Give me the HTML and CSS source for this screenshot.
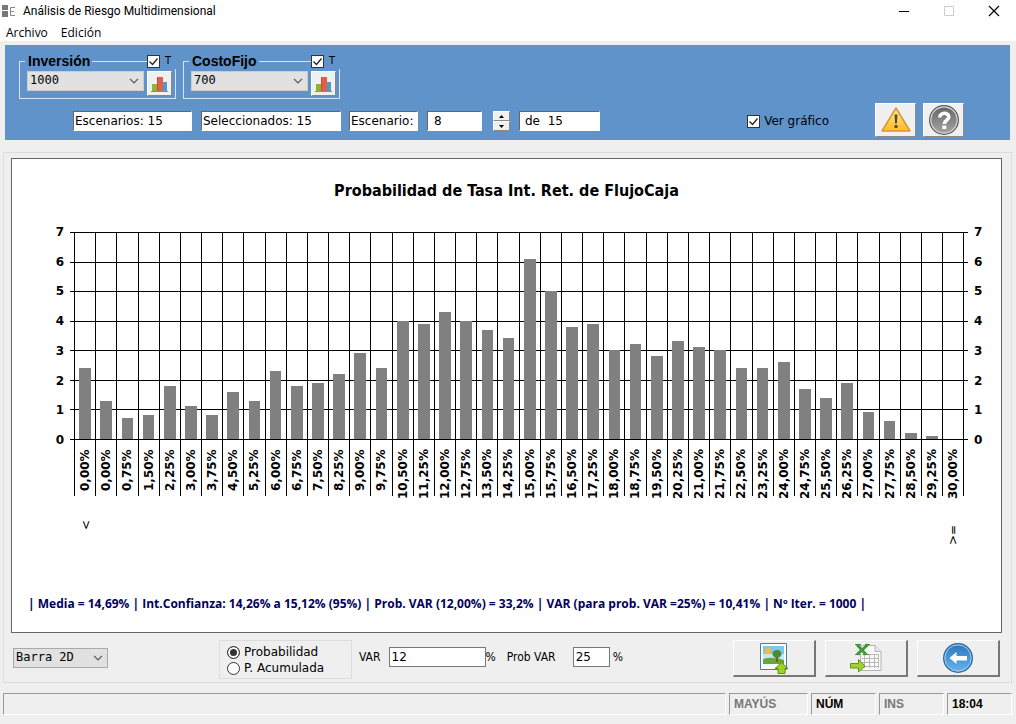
FILE: index.html
```html
<!DOCTYPE html>
<html lang="es">
<head>
<meta charset="utf-8">
<title>Análisis de Riesgo Multidimensional</title>
<link rel="stylesheet" href="styles.css">
</head>
<body>
<header class="titlebar">
  <svg class="app-icon" width="14" height="12" viewBox="0 0 14 12"><path fill="#777" d="M0 0h6v5H0zM0 6h6v6H0z"/><path fill="none" stroke="#888" d="M13 2.500H8.500v8H13M8.500 6.500H12"/></svg>
  <h1 class="app-title">Análisis de Riesgo Multidimensional</h1>
  <button class="win-btn" aria-label="Minimizar"><svg width="12" height="12" viewBox="0 0 12 12"><path stroke="#000" d="M1 6.500h10"/></svg></button>
  <button class="win-btn" aria-label="Maximizar" disabled><svg width="12" height="12" viewBox="0 0 12 12"><path fill="none" stroke="#ccc" d="M1.500 1.500h9v9h-9z"/></svg></button>
  <button class="win-btn" aria-label="Cerrar"><svg width="12" height="12" viewBox="0 0 12 12"><path stroke="#000" stroke-width="1.200" d="M1 1l10 10M11 1L1 11"/></svg></button>
</header>
<nav class="menubar"><button>Archivo</button><button>Edición</button></nav>

<section class="toolbar">
  <div class="groups">
    <div class="group" role="group" aria-labelledby="g1">
      <div class="group-head"><label class="group-name" id="g1" for="inv">Inversión</label><label class="group-check"><input type="checkbox" checked>T</label></div>
      <div class="group-body">
        <select id="inv" class="combo"><option>1000</option></select>
        <button class="mini-btn" aria-label="Gráfico de Inversión"><svg width="17" height="16" viewBox="0 0 17 16"><path fill="#91b52b" d="M1 8h5v7H1z"/><path fill="#e2604a" d="M6 1h6v14H6z"/><path fill="#c84a37" d="M6 1h1v14H6z"/><path fill="#4d9bcb" d="M12 6h4v9h-4z"/><path fill="#8a8a8a" d="M0 15h17v1H0z"/></svg></button>
      </div>
    </div>
    <div class="group" role="group" aria-labelledby="g2">
      <div class="group-head"><label class="group-name" id="g2" for="costo">CostoFijo</label><label class="group-check"><input type="checkbox" checked>T</label></div>
      <div class="group-body">
        <select id="costo" class="combo"><option>700</option></select>
        <button class="mini-btn" aria-label="Gráfico de CostoFijo"><svg width="17" height="16" viewBox="0 0 17 16"><path fill="#91b52b" d="M1 8h5v7H1z"/><path fill="#e2604a" d="M6 1h6v14H6z"/><path fill="#c84a37" d="M6 1h1v14H6z"/><path fill="#4d9bcb" d="M12 6h4v9h-4z"/><path fill="#8a8a8a" d="M0 15h17v1H0z"/></svg></button>
      </div>
    </div>
  </div>
  <div class="scenario-row">
    <input class="sunken w-total" aria-label="Escenarios" value="Escenarios: 15" readonly>
    <input class="sunken w-selected" aria-label="Seleccionados" value="Seleccionados: 15" readonly>
    <input class="sunken w-label" aria-label="Escenario" value="Escenario:" readonly>
    <input class="sunken w-number" aria-label="Número de escenario" value="8">
    <div class="spinner">
      <button aria-label="Subir"><svg width="5" height="3" viewBox="0 0 5 3"><path d="M0 3l2.500-3L5 3z"/></svg></button>
      <button aria-label="Bajar"><svg width="5" height="3" viewBox="0 0 5 3"><path d="M0 0l2.500 3L5 0z"/></svg></button>
    </div>
    <input class="sunken w-of" aria-label="Total" value="de  15" readonly>
    <label class="show-chart"><input type="checkbox" checked>Ver gráfico</label>
    <button class="tool-btn" aria-label="Advertencias"><svg width="30" height="28" viewBox="0 0 30 28"><defs><linearGradient id="warn" x2="0" y2="1"><stop offset="0" stop-color="#ffe699"/><stop offset="1" stop-color="#ffbd22"/></linearGradient></defs><path fill="url(#warn)" stroke="#d99832" stroke-width="1.500" stroke-linejoin="round" d="M15 2L29 25H1z"/><path fill="#554a32" d="M13.500 8.500h3l-.6 9h-1.800zM13.500 19h3v3h-3z"/></svg></button>
    <button class="tool-btn" aria-label="Ayuda"><svg width="32" height="32" viewBox="0 0 32 32"><defs><linearGradient id="help" x2="0" y2="1"><stop offset="0" stop-color="#666"/><stop offset="1" stop-color="#a4a4a4"/></linearGradient></defs><circle cx="16" cy="16" r="15" fill="#555"/><circle cx="16" cy="16" r="13.200" fill="url(#help)" stroke="#ddd" stroke-width="1.200"/><path fill="none" stroke="#fff" stroke-width="3.600" d="M11.800 13.500c0-5.500 9-5.500 9-.5 0 3.500-4.500 3-4.500 7"/><path fill="#fff" d="M14.300 21.500h4V25h-4z"/></svg></button>
  </div>
</section>

<main class="panel">
  <section class="chart-box">
    <h2 class="chart-title">Probabilidad de Tasa Int. Ret. de FlujoCaja</h2>
    <div class="chart">
      <div class="axis axis-left" id="axis-left"></div>
      <div class="plot">
        <div class="lines" id="lines"></div>
        <div class="columns" id="columns"></div>
      </div>
      <div class="axis axis-right" id="axis-right"></div>
    </div>
    <div class="marks"><span class="mark">&lt;</span><span class="mark mark-last">&gt;=</span></div>
    <p class="stats">| Media = 14,69% | Int.Confianza: 14,26% a 15,12% (95%) | Prob. VAR (12,00%) = 33,2% | VAR (para prob. VAR =25%) = 10,41% | Nº Iter. = 1000 |</p>
  </section>
  <section class="controls">
    <select class="combo chart-type" aria-label="Tipo de gráfico"><option>Barra 2D</option></select>
    <div class="radios" role="radiogroup" aria-label="Modo">
      <label><input type="radio" name="mode" checked>Probabilidad</label>
      <label><input type="radio" name="mode">P. Acumulada</label>
    </div>
    <div class="vars">
      <label for="var">VAR</label><input id="var" class="plain w-var" value="12"><span>%</span>
      <label class="prob-label" for="prob">Prob VAR</label><input id="prob" class="plain w-prob" value="25"><span class="prob-unit">%</span>
    </div>
    <div class="actions">
      <button class="wide-btn" aria-label="Exportar imagen"><svg width="30" height="32" viewBox="0 0 30 32"><path fill="#fff" stroke="#4a7fa5" d="M1.500 1.500h26v26h-26z"/><path fill="#7cc8ea" d="M4 4h21v18H4z"/><path fill="#c5e9f0" d="M4 12h21v6H4z"/><path fill="#66a63a" d="M4 17q9-3 21 1v4H4z"/><circle cx="9" cy="9" r="3.200" fill="#f7b944"/><path fill="#7a5a30" d="M17 14h2v6h-2z"/><ellipse cx="18" cy="12" rx="4.500" ry="4" fill="#4c8a35"/><path fill="#9bd32a" stroke="#5b9114" d="M22.500 20.500l6.500 6h-3v5h-7v-5h-3z"/></svg></button>
      <button class="wide-btn" aria-label="Exportar a Excel"><svg width="32" height="30" viewBox="0 0 32 30"><path fill="#fafafa" stroke="#b5b5b5" d="M10.500 2.500H25l6 6v19H10.500z"/><path fill="#e7e7e7" stroke="#b5b5b5" d="M25 2.500v6h6"/><path fill="none" stroke="#b8b8b8" d="M12 11.500h17M12 15.500h17M12 19.500h17M12 23.500h17M14.500 11v14M19.500 11v14M24.500 11v14M28.500 11v14"/><path fill="none" stroke="#3d9a35" stroke-width="3" d="M7 1.500l9 10M18 1.500L7 11.500"/><path fill="none" stroke="#3d9a35" d="M5 1.500h6M15 1.500h5M5 11.500h5M13 11.500h6"/><path fill="#a2d32b" stroke="#62951a" d="M.5 20.500h8v-4l6.500 6.500-6.500 6v-4h-8z"/></svg></button>
      <button class="wide-btn" aria-label="Volver"><svg width="32" height="32" viewBox="0 0 32 32"><defs><linearGradient id="back" x2="0" y2="1"><stop offset="0" stop-color="#2f78bd"/><stop offset="1" stop-color="#63b3ec"/></linearGradient></defs><circle cx="16" cy="16" r="15" fill="#286aaa"/><circle cx="16" cy="16" r="13.200" fill="url(#back)" stroke="#b5d5ef"/><path fill="#fff" d="M7.500 16l7-6v4H25v4.500H14.500V22z"/></svg></button>
    </div>
  </section>
</main>

<footer class="statusbar">
  <span class="cell cell-main"></span>
  <span class="cell cell-caps off">MAYÚS</span>
  <span class="cell">NÚM</span>
  <span class="cell off">INS</span>
  <span class="cell">18:04</span>
</footer>
<script src="chart.js"></script>
</body>
</html>
```
FILE: styles.css
```css
* { box-sizing: border-box; }
body { margin: 0; min-height: 100vh; display: flex; flex-direction: column; background: #efefef; color: #000; font: 12px/16px "DejaVu Sans", Verdana, sans-serif; }
button { margin: 0; padding: 0; border: 0; background: none; color: inherit; font: inherit; display: flex; align-items: center; justify-content: center; }
svg { display: block; }
input, select { margin: 0; font: inherit; color: inherit; }

.titlebar { display: flex; align-items: center; height: 21px; padding-left: 2px; background: #fff; }
.app-icon { margin-right: 7px; }
.app-title { margin: 0; flex: 1; font: 12px/20px Roboto, "Noto Sans", sans-serif; }
.win-btn { width: 45px; height: 20px; }
.menubar { display: flex; gap: 13px; height: 20px; padding: 4px 6px 0; background: #fff; font: 12px/16px "Open Sans", "Noto Sans", sans-serif; }

.toolbar { margin: 4px 6px 0 5px; padding: 16px 46px 3px 14px; background: #5f93c9; }
.groups { display: flex; gap: 7px; }
.group { width: 157px; height: 38px; border: 1px solid #d5e4f3; }
.group-head { display: flex; align-items: center; justify-content: space-between; height: 16px; margin: -9px -1px 0 5px; }
.group-name { padding: 0 2px 0 3px; background: #5f93c9; font: bold 14px/16px "Liberation Sans", Arial, sans-serif; }
.group-check { display: flex; align-items: center; gap: 5px; width: 29px; background: #5f93c9; font: 11px/16px "DejaVu Sans Condensed", "DejaVu Sans", sans-serif; }
.group-body { display: flex; align-items: flex-start; gap: 3px; padding: 2px 0 0 7px; }

input[type="checkbox"], input[type="radio"] { appearance: none; width: 13px; height: 13px; flex: none; border: 1px solid #333; background: #fff; }
input[type="checkbox"]:checked { background: #fff url("data:image/svg+xml,%3Csvg xmlns='http://www.w3.org/2000/svg' viewBox='0 0 11 11'%3E%3Cpath fill='none' stroke='%23222' stroke-width='1.300' d='M1.500 5.500l3 3 5-6'/%3E%3C/svg%3E"); }
input[type="radio"] { border-radius: 50%; }
input[type="radio"]:checked { background: #333; box-shadow: inset 0 0 0 2px #fff; }

.combo { appearance: none; width: 117px; height: 20px; padding: 0 2px 2px; border: 1px solid #ccc; border-radius: 0; background: #e1e1e1 url("data:image/svg+xml,%3Csvg xmlns='http://www.w3.org/2000/svg' width='10' height='6' viewBox='0 0 10 6'%3E%3Cpath fill='none' stroke='%23555' stroke-width='1.200' d='M1 .8l4 4 4-4'/%3E%3C/svg%3E") no-repeat right 4px center; font: 12px/16px "DejaVu Sans Mono", monospace; }
.mini-btn, .tool-btn, .spinner button { background: #f0f0f0; border: 1px solid; border-color: #fff #888 #888 #fff; }
.mini-btn { width: 25px; height: 25px; }

.scenario-row { display: flex; align-items: center; height: 34px; margin-top: 4px; padding-left: 54px; }
.sunken { height: 20px; margin-top: 2px; padding: 0 1px; border: 1px solid; border-color: #666 #fff #fff #666; border-radius: 0; background: #fff; font: 12px/16px "DejaVu Sans", sans-serif; }
.w-total { width: 119px; margin-right: 9px; }
.w-selected { width: 140px; margin-right: 8px; }
.w-label { width: 69px; margin-right: 9px; }
.w-number { width: 55px; margin-right: 11px; padding-left: 6px; }
.w-of { width: 81px; padding-left: 5px; white-space: pre; }
.spinner { width: 17px; margin: 2px 9px 0 0; }
.spinner button { width: 17px; height: 10px; }
.show-chart { display: flex; align-items: center; gap: 4px; margin: 2px 46px 0 auto; }
.tool-btn { width: 41px; height: 34px; }
.tool-btn + .tool-btn { margin-left: 7px; }

.panel { flex: 1; display: flex; flex-direction: column; margin: 12px 4px 0 3px; padding: 5px 9px 3px 7px; border: 1px solid #dcdcdc; }
.chart-box { flex: 1; padding: 22px 16px 20px; border: 1px solid #666; background: #fff; }
.chart-title { margin: 0; text-align: center; font: bold 16px/20px "DejaVu Sans Condensed", Tahoma, "DejaVu Sans", sans-serif; }
.chart { display: flex; margin-top: 23px; }
.axis { display: flex; flex-direction: column; justify-content: space-between; width: 46px; height: 224px; font: bold 12px/16px "DejaVu Sans", sans-serif; }
.axis-left { padding-right: 10px; text-align: right; }
.axis-right { width: 21px; padding-left: 10px; }
.plot { position: relative; flex: 1; margin-top: 8px; }
.lines { position: absolute; top: 0; left: -4px; right: -4px; height: 208px; display: flex; flex-direction: column; justify-content: space-between; }
.line { height: 1px; background: #000; }
.columns { position: relative; display: flex; border-right: 1px solid #000; }
.column { flex: 1; min-width: 0; border-left: 1px solid #000; }
.bar-area { display: flex; align-items: flex-end; justify-content: center; height: 207px; }
.bar { width: 58%; background: #808080; }
.tick { display: flex; align-items: center; justify-content: flex-end; width: 100%; height: 57px; padding-bottom: 10px; writing-mode: vertical-rl; transform: rotate(180deg); font: bold 12px/20px "DejaVu Sans", Verdana, sans-serif; white-space: nowrap; }
.marks { display: flex; justify-content: space-between; margin: 24px 24px 0 50px; height: 25px; font: 12px/16px "DejaVu Sans", sans-serif; }
.mark { writing-mode: vertical-rl; transform: rotate(180deg); text-align: right; }
.mark-last { text-align: left; }
.stats { margin: 51px 0 0; color: #00005c; font: bold 12px/16px "Open Sans", "Noto Sans", sans-serif; white-space: nowrap; }

.controls { display: flex; align-items: flex-start; padding-top: 6px; }
.chart-type { width: 95px; margin: 9px 0 0 2px; border-color: #aaa; }
.radios { width: 133px; height: 39px; margin: 1px 0 0 111px; padding: 3px 7px; border: 1px solid #dcdcdc; }
.radios label { display: flex; align-items: center; gap: 4px; }
.vars { display: flex; align-items: center; margin: 8px 0 0 7px; font-size: 12px; }
.vars label, .vars span { font-family: "DejaVu Sans Condensed", "DejaVu Sans", sans-serif; }
.plain { height: 20px; padding: 0 2px; border: 1px solid #777; border-radius: 0; background: #fff; }
.w-var { width: 97px; margin-left: 8px; }
.w-prob { width: 37px; margin-left: 17px; }
.prob-label { margin-left: 11px; }
.prob-unit { margin-left: 3px; }
.actions { display: flex; gap: 9px; margin: 0 2px 0 auto; }
.wide-btn { width: 83px; height: 37px; margin-top: 1px; border: solid; border-width: 1px 2px 2px 1px; border-color: #fff #777 #777 #fff; background: #efefef; }

.statusbar { display: flex; gap: 3px; margin: 10px 4px 9px 3px; height: 22px; font: bold 12px/20px "Liberation Sans", Arial, sans-serif; }
.cell { width: 65px; padding-left: 4px; border: 1px solid; border-color: #999 #fff #fff #999; }
.cell-main { flex: 1; }
.cell-caps { width: 79px; }
.off { color: #777; }
```
FILE: chart.js
```js
const values = [2.4, 1.3, 0.7, 0.8, 1.8, 1.1, 0.8, 1.6, 1.3, 2.3, 1.8, 1.9, 2.2, 2.9, 2.4, 4, 3.9, 4.3, 4, 3.7, 3.4,
  6.1, 5, 3.8, 3.9, 3, 3.2, 2.8, 3.3, 3.1, 3, 2.4, 2.4, 2.6, 1.7, 1.4, 1.9, 0.9, 0.6, 0.2, 0.1, 0];
const max = 7;

function add(parent, className, text) {
  const el = document.createElement("div");
  el.className = className;
  if (text !== undefined) el.textContent = text;
  parent.appendChild(el);
  return el;
}

for (let n = max; n >= 0; n--) {
  add(document.getElementById("axis-left"), "value", n);
  add(document.getElementById("axis-right"), "value", n);
  add(document.getElementById("lines"), "line");
}

values.forEach((value, i) => {
  const column = add(document.getElementById("columns"), "column");
  const bar = add(add(column, "bar-area"), "bar");
  bar.style.height = (value / max * 100) + "%";
  const start = Math.max(0, i - 1) * 0.75;
  add(column, "tick", start.toFixed(2).replace(".", ",") + "%");
});
```
